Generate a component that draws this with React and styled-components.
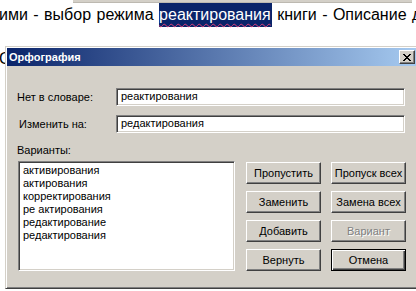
import React from 'react';
import styled, { createGlobalStyle } from 'styled-components';

const face = '#d4d0c8';
const shadow = '#808080';
const darkShadow = '#404040';
const uiFont = '"Liberation Sans", Arial, sans-serif';

const GlobalStyle = createGlobalStyle`
  html, body {
    margin: 0;
    padding: 0;
    background: #fff;
    overflow: hidden;
  }
`;

const Page = styled.div`
  position: relative;
  width: 416px;
  height: 291px;
  overflow: hidden;
  font-family: ${uiFont};
`;

const TopStrip = styled.div`
  margin-left: 73px;
  width: 339px;
  height: 3px;
  background: ${face};
  border-bottom: 1px solid #bdb9b1;
  box-sizing: border-box;
`;

const DocLine = styled.div`
  height: 24px;
  line-height: 24px;
  font-size: 16px;
  word-spacing: 1px;
  color: #000;
  white-space: nowrap;
  margin-top: ${p => p.$gap || 0}px;
  margin-left: ${p => p.$indent || 0}px;
`;

const Selected = styled.span`
  display: inline-block;
  height: 24px;
  padding-right: 1px;
  background: #0a246a;
  color: #fff;
  text-decoration: underline wavy #e0407a;
  text-decoration-thickness: 1px;
  text-underline-offset: 3px;
`;

const Window = styled.div`
  position: absolute;
  left: 5px;
  top: 46px;
  width: 414px;
  height: 243px;
  box-sizing: border-box;
  padding: 1px;
  background: ${face};
  border: 1px solid;
  border-color: ${face} ${darkShadow} ${darkShadow} ${face};
  box-shadow: inset 1px 1px #fff, inset -1px -1px ${shadow};
  font-size: 11px;
  color: #000;
`;

const TitleBar = styled.div`
  display: flex;
  align-items: center;
  justify-content: space-between;
  height: 18px;
  padding-left: 2px;
  background: linear-gradient(to right, #0a246a, #a6caf0);
`;

const Title = styled.span`
  color: #fff;
  font-weight: bold;
  font-size: 11px;
`;

const CloseButton = styled.div`
  display: flex;
  align-items: center;
  justify-content: center;
  width: 16px;
  height: 14px;
  margin-right: 2px;
  box-sizing: border-box;
  background: ${face};
  border: 1px solid;
  border-color: #fff ${darkShadow} ${darkShadow} #fff;
  box-shadow: inset -1px -1px ${shadow};
`;

const Body = styled.div`
  padding: 22px 0 0 10px;
`;

const Form = styled.div`
  display: grid;
  grid-template-columns: 99px 289px;
  row-gap: 9px;
  align-items: center;
`;

const Label = styled.div`
  line-height: 13px;
  margin-left: ${p => p.$shift || 0}px;
`;

const Field = styled.div`
  height: 18px;
  box-sizing: border-box;
  padding-left: 4px;
  line-height: 14px;
  background: #fff;
  border: 1px solid;
  border-color: ${shadow} #fff #fff ${shadow};
  box-shadow: inset 1px 1px ${darkShadow}, inset -1px -1px ${face};
`;

const ListLabel = styled(Label)`
  margin-top: 11px;
`;

const Lower = styled.div`
  display: flex;
  align-items: flex-start;
  margin-top: 4px;
`;

const ListBox = styled.div`
  width: 217px;
  height: 110px;
  margin-left: 1px;
  box-sizing: border-box;
  padding: 2px 4px;
  background: #fff;
  border: 1px solid;
  border-color: ${shadow} #fff #fff ${shadow};
  box-shadow: inset 1px 1px ${darkShadow}, inset -1px -1px ${face};
`;

const ListItem = styled.div`
  line-height: 13px;
  white-space: nowrap;
`;

const Buttons = styled.div`
  display: grid;
  grid-template-columns: 75px 75px;
  grid-auto-rows: 22px;
  column-gap: 10px;
  row-gap: 7px;
  margin-left: 11px;
  margin-top: 1px;
`;

const Button = styled.div`
  display: flex;
  align-items: center;
  justify-content: center;
  box-sizing: border-box;
  background: ${face};
  color: ${p => (p.$disabled ? shadow : '#000')};
  text-shadow: ${p => (p.$disabled ? '1px 1px #fff' : 'none')};
  border: 1px solid;
  border-color: ${p => (p.$default ? '#000' : `#fff ${darkShadow} ${darkShadow} #fff`)};
  box-shadow: ${p =>
    p.$default
      ? `inset 1px 1px #fff, inset -1px -1px ${darkShadow}, inset -2px -2px ${shadow}`
      : `inset -1px -1px ${shadow}`};
`;

const variants = [
  'активирования',
  'актирования',
  'корректирования',
  'ре актирования',
  'редактирование',
  'редактирования',
];

const actions = [
  { label: 'Пропустить' },
  { label: 'Пропуск всех' },
  { label: 'Заменить' },
  { label: 'Замена всех' },
  { label: 'Добавить' },
  { label: 'Вариант', disabled: true },
  { label: 'Вернуть' },
  { label: 'Отмена', isDefault: true },
];

export default function App() {
  return (
    <Page>
      <GlobalStyle />
      <TopStrip />
      <DocLine $indent={-1}>
        ими - выбор режима <Selected>реактирования</Selected> книги - Описание документа
      </DocLine>
      <DocLine $gap={20} $indent={-1}>С</DocLine>

      <Window>
        <TitleBar>
          <Title>Орфография</Title>
          <CloseButton>
            <svg width="8" height="7" viewBox="0 0 8 7">
              <path d="M0 0 L7 7 M1 0 L8 7 M7 0 L0 7 M8 0 L1 7" stroke="#000" strokeWidth="1" fill="none" />
            </svg>
          </CloseButton>
        </TitleBar>
        <Body>
          <Form>
            <Label>Нет в словаре:</Label>
            <Field>реактирования</Field>
            <Label $shift={2}>Изменить на:</Label>
            <Field>редактирования</Field>
          </Form>
          <ListLabel>Варианты:</ListLabel>
          <Lower>
            <ListBox>
              {variants.map(v => (
                <ListItem key={v}>{v}</ListItem>
              ))}
            </ListBox>
            <Buttons>
              {actions.map(a => (
                <Button key={a.label} $disabled={a.disabled} $default={a.isDefault}>
                  {a.label}
                </Button>
              ))}
            </Buttons>
          </Lower>
        </Body>
      </Window>
    </Page>
  );
}
